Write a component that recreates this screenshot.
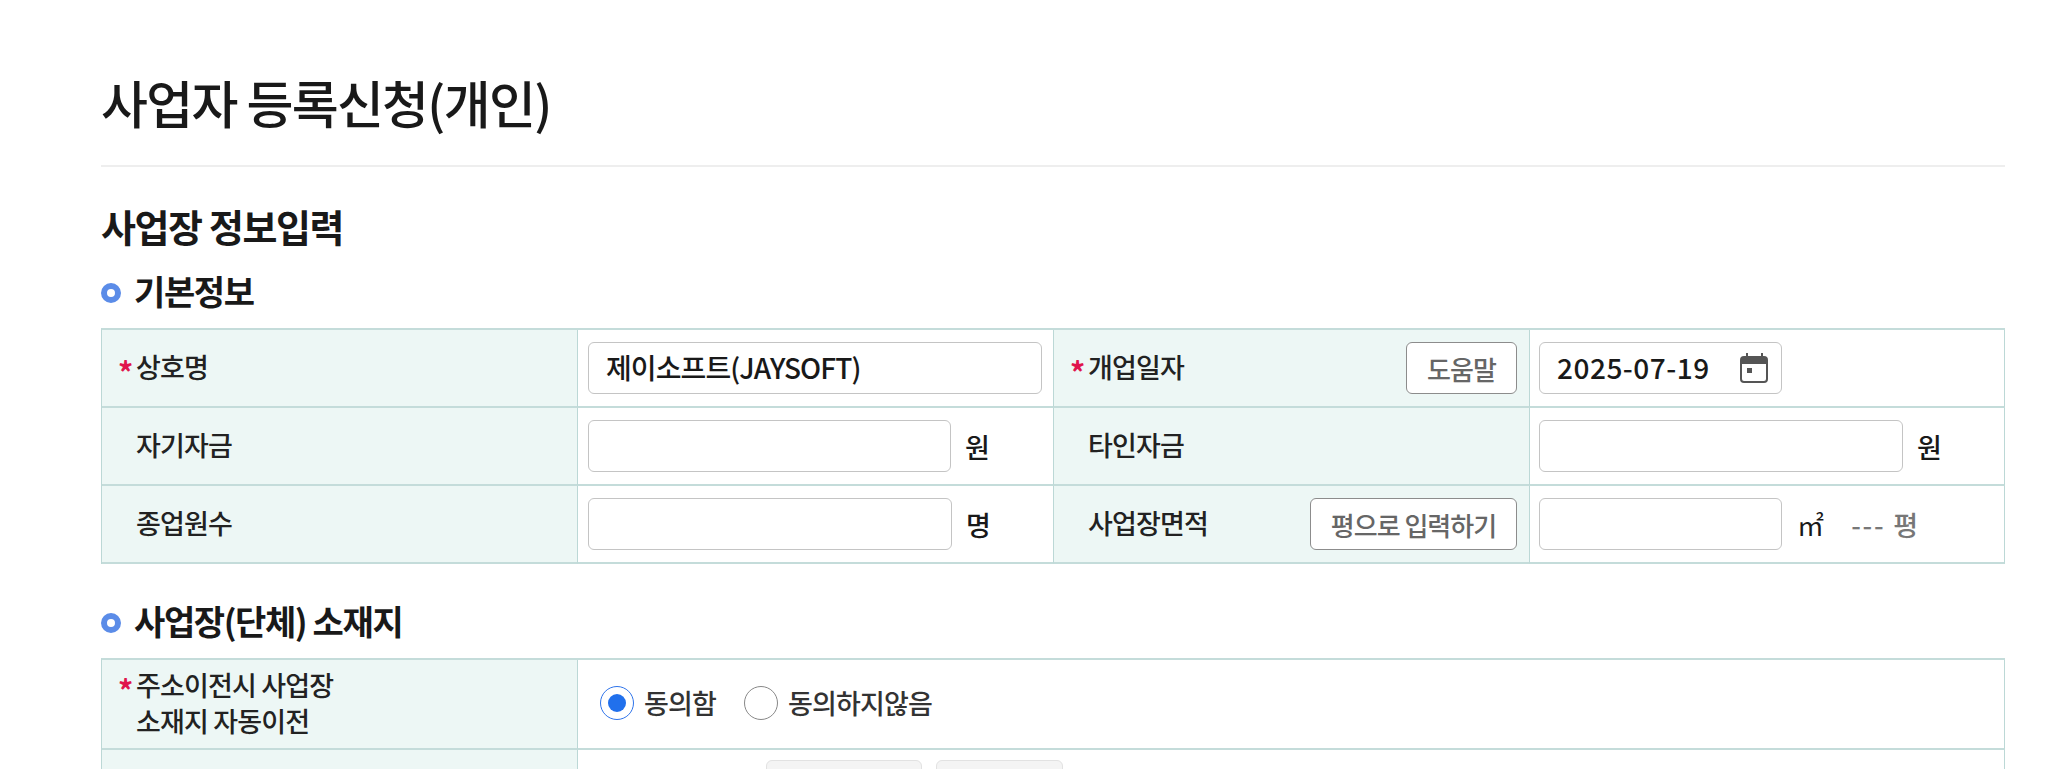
<div class="page">
  <h1>사업자 등록신청(개인)</h1>
  <h2>사업장 정보입력</h2>
  <h3><span class="dot"></span>기본정보</h3>
  <div class="tbl basic">
    <div class="th"><span class="label req">상호명</span></div>
    <div class="td"><div class="inp full val">제이소프트(JAYSOFT)</div></div>
    <div class="th"><span class="label req">개업일자</span><button class="btn help">도움말</button></div>
    <div class="td">
      <div class="inp date val digits">2025-07-19
        <svg class="cal" viewBox="0 0 28 30" width="28" height="30">
          <path d="M7 0v5M22 0v5" stroke="#555" stroke-width="2" fill="none"/>
          <path d="M1 7a3 3 0 0 1 3-3h20a3 3 0 0 1 3 3v4H1z" fill="#555"/>
          <rect x="1" y="4" width="26" height="25" rx="3" stroke="#555" stroke-width="2" fill="none"/>
          <rect x="7" y="15" width="5" height="5" fill="#555"/>
        </svg>
      </div>
    </div>
    <div class="th"><span class="label">자기자금</span></div>
    <div class="td"><div class="inp w363"></div><span class="unit">원</span></div>
    <div class="th"><span class="label">타인자금</span></div>
    <div class="td"><div class="inp w364"></div><span class="unit">원</span></div>
    <div class="th"><span class="label">종업원수</span></div>
    <div class="td"><div class="inp w364"></div><span class="unit">명</span></div>
    <div class="th"><span class="label">사업장면적</span><button class="btn conv">평으로 입력하기</button></div>
    <div class="td"><div class="inp date"></div><span class="unit sq">㎡</span><span class="py">--- 평</span></div>
  </div>

  <h3 class="second"><span class="dot"></span>사업장(단체) 소재지</h3>
  <div class="tbl addr">
    <div class="th"><span class="label req two">주소이전시 사업장<br />소재지 자동이전</span></div>
    <div class="td wide">
      <label class="radio"><span class="circle on"></span>동의함</label>
      <label class="radio"><span class="circle"></span>동의하지않음</label>
    </div>
    <div class="th"></div>
    <div class="td wide zip">
      <div class="inp grey a"></div>
      <div class="inp grey b"></div>
    </div>
  </div>
</div>

<style>
  :global(body) {
    margin: 0;
    background: #fff;
    overflow: hidden;
  }
  .page {
    height: 769px;
    overflow: hidden;
    box-sizing: border-box;
    padding: 72px 43px 0 101px;
    font-family: "Noto Sans CJK KR", "Noto Sans", sans-serif;
    color: #191919;
  }
  h1 {
    margin: 0;
    height: 93px;
    font-size: 51px;
    line-height: 60px;
    font-weight: 500;
    letter-spacing: -1.7px;
    border-bottom: 2px solid #eeeeee;
  }
  h2 {
    margin: 36px 0 0;
    font-size: 38px;
    line-height: 46px;
    font-weight: 700;
    letter-spacing: -1.4px;
  }
  h3 {
    margin: 20px 0 0;
    height: 44px;
    display: flex;
    align-items: center;
    font-size: 34px;
    line-height: 44px;
    font-weight: 700;
    letter-spacing: -1.4px;
  }
  h3.second {
    margin-top: 35px;
  }
  .dot {
    width: 20px;
    height: 20px;
    box-sizing: border-box;
    border: 6px solid #5b8ce8;
    border-radius: 50%;
    margin: 3px 13px 0 0;
  }
  .tbl {
    margin-top: 15px;
    display: grid;
    grid-template-columns: 476px 476px 476px 1fr;
    border-top: 2px solid #c4dcda;
    border-left: 1px solid #bcd8d6;
    width: 1904px;
    box-sizing: border-box;
    font-size: 27px;
    letter-spacing: -0.85px;
  }
  .basic {
    grid-auto-rows: 78px;
  }
  .addr {
    grid-template-columns: 476px 1fr;
    grid-template-rows: 90px 78px;
  }
  .th, .td {
    box-sizing: border-box;
    border-right: 1px solid #bcd8d6;
    border-bottom: 2px solid #c4dcda;
    display: flex;
    align-items: center;
  }
  .th {
    background: #edf7f5;
    padding: 0 12px 0 34px;
    justify-content: space-between;
  }
  .td {
    padding: 0 10px;
    background: #fff;
  }
  .basic .td:nth-child(4n) {
    padding-left: 9px;
  }
  .label {
    position: relative;
    line-height: 36px;
    font-weight: 500;
    color: #222;
    margin-top: -2px;
  }
  .req::before {
    content: "*";
    position: absolute;
    left: -18px;
    top: 9px;
    line-height: 26px;
    color: #e0144c;
    font-size: 30px;
    font-weight: 700;
  }
  .inp {
    box-sizing: border-box;
    height: 52px;
    border: 1px solid #c4c4c4;
    border-radius: 6px;
    background: #fff;
    display: flex;
    align-items: center;
    padding: 0 17px;
    position: relative;
    flex: none;
  }
  .val {
    font-size: 28px;
    font-weight: 500;
    color: #191919;
    letter-spacing: -0.9px;
    padding-bottom: 2px;
  }
  .digits {
    letter-spacing: 0.5px;
  }
  .full { width: 454px; }
  .date { width: 243px; }
  .w363 { width: 363px; }
  .w364 { width: 364px; }
  .cal {
    position: absolute;
    right: 13px;
    top: 10px;
    width: 28px;
    height: 30px;
  }
  .unit {
    margin-left: 14px;
    font-weight: 500;
  }
  .sq { margin-left: 15px; font-weight: 400; }
  .py {
    margin-left: 28px;
    color: #777;
    letter-spacing: 1.8px;
    font-weight: 500;
  }
  .btn {
    box-sizing: border-box;
    height: 52px;
    border: 1px solid #8c8c8c;
    border-radius: 6px;
    background: #fff;
    color: #666;
    font: inherit;
    font-size: 26px;
    letter-spacing: -1px;
    font-weight: 500;
    padding: 0;
  }
  .help { width: 111px; }
  .conv { width: 207px; }
  .wide {
    gap: 28px;
    padding-left: 22px;
  }
  .radio {
    display: flex;
    align-items: center;
    gap: 10px;
    font-weight: 500;
    color: #333;
    margin-top: -3px;
  }
  .circle {
    width: 34px;
    height: 34px;
    box-sizing: border-box;
    border-radius: 50%;
    border: 1px solid #888;
    background: #fff;
    position: relative;
  }
  .circle.on { border-color: #2f74ea; }
  .circle.on::after {
    content: "";
    position: absolute;
    left: 7px;
    top: 7px;
    width: 18px;
    height: 18px;
    border-radius: 50%;
    background: #2170ec;
  }
  .zip { gap: 14px; padding-left: 188px; align-items: flex-start; padding-top: 10px; }
  .grey { background: #f4f4f4; border-color: #e2e2e2; }
  .a { width: 156px; }
  .b { width: 127px; }
</style>
